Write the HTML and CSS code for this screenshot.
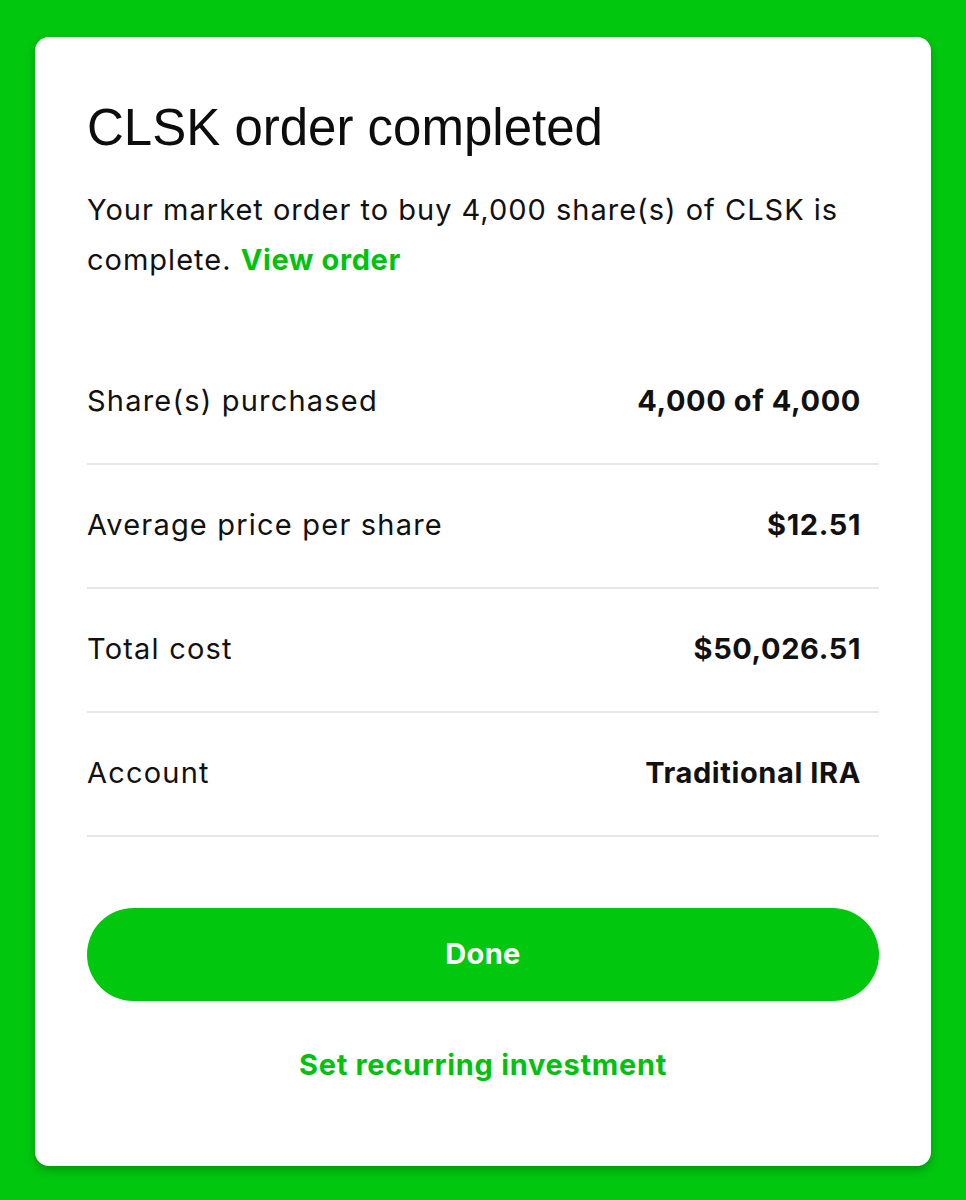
FILE: index.html
```html
<!DOCTYPE html>
<html lang="en">
<head>
<meta charset="utf-8">
<title>CLSK order completed</title>
<link rel="stylesheet" href="styles.css">
</head>
<body>
<main class="card">
  <h1 class="title">CLSK order completed</h1>
  <p class="desc">Your market order to buy 4,000 share(s) of CLSK is complete. <a class="link" href="#">View order</a></p>
  <dl class="details">
    <div class="row"><dt>Share(s) purchased</dt><dd>4,000 of 4,000</dd></div>
    <div class="row"><dt>Average price per share</dt><dd>$12.51</dd></div>
    <div class="row"><dt>Total cost</dt><dd>$50,026.51</dd></div>
    <div class="row"><dt>Account</dt><dd>Traditional IRA</dd></div>
  </dl>
  <button class="done" type="button">Done</button>
  <a class="recurring" href="#">Set recurring investment</a>
</main>
</body>
</html>
```
FILE: styles.css
```css
html, body {
  margin: 0;
  padding: 0;
}
body {
  background: #01c70f;
  font-family: Inter, "Noto Sans", sans-serif;
  color: #111;
  padding: 37px 35px 34px;
}
.card {
  background: #fff;
  border-radius: 14px;
  box-shadow: 0 4px 8px rgba(0, 60, 0, 0.35);
  padding: 60px 52px 0;
  height: 1129px;
  box-sizing: border-box;
  display: flex;
  flex-direction: column;
}
.title {
  margin: 0;
  font-family: "Liberation Sans", Arial, sans-serif;
  font-size: 51px;
  line-height: 61px;
  font-weight: 400;
  color: #0d0d0d;
}
.desc {
  margin: 27px 0 0;
  font-size: 29px;
  line-height: 50px;
  font-weight: 400;
  letter-spacing: 1px;
}
.link {
  color: #00c20e;
  font-weight: 700;
  letter-spacing: 0.6px;
  text-decoration: none;
}
.details {
  margin: 56px 0 0;
}
.row {
  display: flex;
  justify-content: space-between;
  align-items: center;
  height: 122px;
  box-sizing: content-box;
  border-bottom: 2px solid #e6e8eb;
  padding-right: 18px;
  font-size: 29px;
}
.row dt {
  font-weight: 400;
  letter-spacing: 1.2px;
  margin-bottom: 3px;
}
.row dd {
  margin: 0 0 3px;
  font-weight: 700;
  letter-spacing: 0.6px;
}
.done {
  margin-top: 71px;
  height: 93px;
  padding: 0 0 3px;
  border: 0;
  border-radius: 47px;
  background: #01c70f;
  color: #fff;
  font-family: inherit;
  font-size: 29px;
  font-weight: 700;
  letter-spacing: 0.3px;
}
.recurring {
  margin-top: 44px;
  align-self: center;
  color: #00c20e;
  font-size: 29px;
  line-height: 40px;
  font-weight: 700;
  letter-spacing: 0.7px;
  text-decoration: none;
}
```
